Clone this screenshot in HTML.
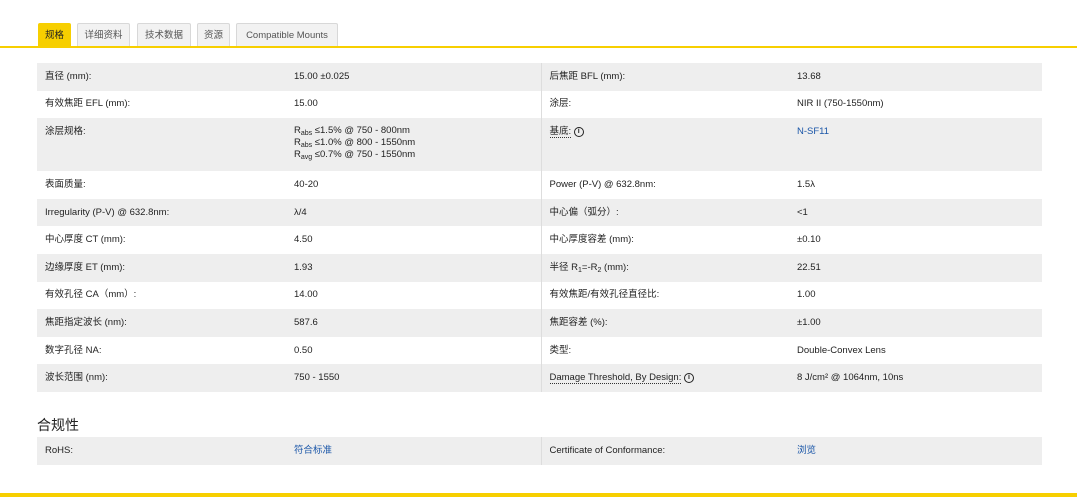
<!DOCTYPE html>
<html><head><meta charset="utf-8"><style>
body{margin:0;width:1077px;height:497px;background:#fff;font-family:"Liberation Sans","Noto Sans CJK SC",sans-serif;color:#222;font-size:9.5px;position:relative;overflow:hidden}
.tab{position:absolute;top:23px;height:23px;line-height:23px;text-align:center;background:#f2f2f2;border:1px solid #d8d8d8;border-bottom:none;color:#555;font-size:9.5px;border-radius:2px 2px 0 0;box-sizing:border-box}
.tab.on{background:#f7cf00;border-color:#f7cf00;color:#222}
.yl{position:absolute;left:0;right:0;height:2px;background:#f7cf00}
table{position:absolute;left:37px;width:1005px;border-collapse:collapse;table-layout:fixed}
td{padding:0 0 0 8px;height:27.6px;vertical-align:middle;line-height:12px;box-sizing:border-box}
tr.g td{background:#eeeeee}
td.c2{border-right:1px solid #ddd}
.b{color:#1a56a8}
sub{font-size:7px;line-height:0;vertical-align:-2px}
.tall td{vertical-align:top;padding-top:8px;height:53px}
.tall td.c2{padding-top:7px}
.u{border-bottom:1px dotted #333}
.i{display:inline-block;width:8px;height:8px;border:1px solid #222;border-radius:50%;font-size:7px;line-height:8px;text-align:center;font-weight:bold;vertical-align:middle}
h3{position:absolute;left:37px;top:415px;margin:0;font-size:14px;font-weight:normal;color:#222}
</style></head><body>
<div class="tab on" style="left:38px;width:33px">规格</div>
<div class="tab" style="left:77px;width:53px">详细资料</div>
<div class="tab" style="left:137px;width:54px">技术数据</div>
<div class="tab" style="left:197px;width:33px">资源</div>
<div class="tab" style="left:236px;width:102px">Compatible Mounts</div>
<div class="yl" style="top:46px"></div>
<table style="top:63px">
<colgroup><col style="width:249px"><col style="width:255px"><col style="width:248px"><col></colgroup>
<tr class="g"><td class="c1">直径 (mm):</td><td class="c2">15.00 ±0.025</td><td class="c3">后焦距 BFL (mm):</td><td>13.68</td></tr>
<tr><td class="c1">有效焦距 EFL (mm):</td><td class="c2">15.00</td><td class="c3">涂层:</td><td>NIR II (750-1550nm)</td></tr>
<tr class="g tall"><td class="c1">涂层规格:</td><td class="c2">R<sub>abs</sub> ≤1.5% @ 750 - 800nm<br>R<sub>abs</sub> ≤1.0% @ 800 - 1550nm<br>R<sub>avg</sub> ≤0.7% @ 750 - 1550nm</td><td class="c3"><span class="u">基底:</span> <span class="i">i</span></td><td class="b">N-SF11</td></tr>
<tr><td class="c1">表面质量:</td><td class="c2">40-20</td><td class="c3">Power (P-V) @ 632.8nm:</td><td>1.5λ</td></tr>
<tr class="g"><td class="c1">Irregularity (P-V) @ 632.8nm:</td><td class="c2">λ/4</td><td class="c3">中心偏（弧分）:</td><td>&lt;1</td></tr>
<tr><td class="c1">中心厚度 CT (mm):</td><td class="c2">4.50</td><td class="c3">中心厚度容差 (mm):</td><td>±0.10</td></tr>
<tr class="g"><td class="c1">边缘厚度 ET (mm):</td><td class="c2">1.93</td><td class="c3">半径 R<sub>1</sub>=-R<sub>2</sub> (mm):</td><td>22.51</td></tr>
<tr><td class="c1">有效孔径 CA（mm）:</td><td class="c2">14.00</td><td class="c3">有效焦距/有效孔径直径比:</td><td>1.00</td></tr>
<tr class="g"><td class="c1">焦距指定波长 (nm):</td><td class="c2">587.6</td><td class="c3">焦距容差 (%):</td><td>±1.00</td></tr>
<tr><td class="c1">数字孔径 NA:</td><td class="c2">0.50</td><td class="c3">类型:</td><td>Double-Convex Lens</td></tr>
<tr class="g"><td class="c1">波长范围 (nm):</td><td class="c2">750 - 1550</td><td class="c3"><span class="u">Damage Threshold, By Design:</span> <span class="i">i</span></td><td>8 J/cm² @ 1064nm, 10ns</td></tr>
</table>
<h3>合规性</h3>
<table style="top:437px">
<colgroup><col style="width:249px"><col style="width:255px"><col style="width:248px"><col></colgroup>
<tr class="g"><td class="c1" style="height:26px">RoHS:</td><td class="c2 b">符合标准</td><td class="c3">Certificate of Conformance:</td><td class="b">浏览</td></tr>
</table>
<div class="yl" style="top:493px;height:4px"></div>
</body></html>
